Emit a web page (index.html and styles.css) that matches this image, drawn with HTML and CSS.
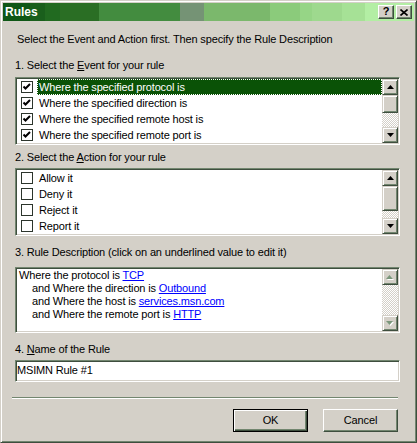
FILE: index.html
```html
<!DOCTYPE html>
<html>
<head>
<meta charset="utf-8">
<link rel="stylesheet" href="styles.css">
</head>
<body>
<div class="win">
  <div class="titlebar">
    <span class="title">Rules</span>
    <div class="caps">
      <div class="cap-btn help">?</div>
      <div class="cap-btn close">
        <svg width="8" height="7" viewBox="0 0 8 7"><path d="M0.5 0.5 L7.5 6.5 M7.5 0.5 L0.5 6.5" stroke="#000" stroke-width="1.6" fill="none"/></svg>
      </div>
    </div>
  </div>
  <div class="body">
    <p class="intro">Select the Event and Action first. Then specify the Rule Description</p>

    <div class="label l1">1. Select the <u>E</u>vent for your rule</div>
    <div class="sunken listbox">
      <ul class="items">
        <li class="item"><span class="check on"><svg width="10" height="10" viewBox="0 0 10 10"><polyline points="1.5,4.5 3.5,6.5 8,2" stroke="#000" stroke-width="2" fill="none"/></svg></span><span class="text selected">Where the specified protocol is</span></li>
        <li class="item"><span class="check on"><svg width="10" height="10" viewBox="0 0 10 10"><polyline points="1.5,4.5 3.5,6.5 8,2" stroke="#000" stroke-width="2" fill="none"/></svg></span><span class="text">Where the specified direction is</span></li>
        <li class="item"><span class="check on"><svg width="10" height="10" viewBox="0 0 10 10"><polyline points="1.5,4.5 3.5,6.5 8,2" stroke="#000" stroke-width="2" fill="none"/></svg></span><span class="text">Where the specified remote host is</span></li>
        <li class="item"><span class="check on"><svg width="10" height="10" viewBox="0 0 10 10"><polyline points="1.5,4.5 3.5,6.5 8,2" stroke="#000" stroke-width="2" fill="none"/></svg></span><span class="text">Where the specified remote port is</span></li>
      </ul>
      <div class="scrollbar">
        <div class="sb-btn"><svg width="7" height="4" viewBox="0 0 7 4"><polygon points="3.5,0 7,4 0,4" fill="#000"/></svg></div>
        <div class="sb-thumb t1"></div>
        <div class="sb-track"></div>
        <div class="sb-btn"><svg width="7" height="4" viewBox="0 0 7 4"><polygon points="0,0 7,0 3.5,4" fill="#000"/></svg></div>
      </div>
    </div>

    <div class="label l2">2. Select the <u>A</u>ction for your rule</div>
    <div class="sunken listbox lb2">
      <ul class="items">
        <li class="item"><span class="check"></span><span class="text">Allow it</span></li>
        <li class="item"><span class="check"></span><span class="text">Deny it</span></li>
        <li class="item"><span class="check"></span><span class="text">Reject it</span></li>
        <li class="item"><span class="check"></span><span class="text">Report it</span></li>
      </ul>
      <div class="scrollbar">
        <div class="sb-btn"><svg width="7" height="4" viewBox="0 0 7 4"><polygon points="3.5,0 7,4 0,4" fill="#000"/></svg></div>
        <div class="sb-thumb t2"></div>
        <div class="sb-track"></div>
        <div class="sb-btn"><svg width="7" height="4" viewBox="0 0 7 4"><polygon points="0,0 7,0 3.5,4" fill="#000"/></svg></div>
      </div>
    </div>

    <div class="label l3">3. Rule Description (click on an underlined value to edit it)</div>
    <div class="sunken descbox">
      <div class="desc">
        <div class="dline">Where the protocol is <a class="link">TCP</a></div>
        <div class="dline ind">and Where the direction is <a class="link">Outbound</a></div>
        <div class="dline ind">and Where the host is <a class="link">services.msn.com</a></div>
        <div class="dline ind">and Where the remote port is <a class="link">HTTP</a></div>
      </div>
      <div class="scrollbar">
        <div class="sb-btn dis"><svg width="8" height="5" viewBox="0 0 8 5"><polygon points="4.5,1 8,5 1,5" fill="#fff"/><polygon points="3.5,0 7,4 0,4" fill="#7a967a"/></svg></div>
        <div class="sb-track"></div>
        <div class="sb-btn dis"><svg width="8" height="5" viewBox="0 0 8 5"><polygon points="1,1 8,1 4.5,5" fill="#fff"/><polygon points="0,0 7,0 3.5,4" fill="#7a967a"/></svg></div>
      </div>
    </div>

    <div class="label l4">4. <u>N</u>ame of the Rule</div>
    <div class="sunken input">MSIMN Rule #1</div>

    <div class="sep"></div>

    <div class="buttons">
      <div class="btn default"><span class="btn-in">OK</span></div>
      <div class="btn"><span class="btn-in">Cancel</span></div>
    </div>
  </div>
</div>
</body>
</html>
```

FILE: styles.css
```css
* { box-sizing: border-box; }
html, body { margin: 0; padding: 0; background: #d4d0c8; }
body { font-family: "Liberation Sans", Arial, sans-serif; font-size: 11px; line-height: 13px; color: #000; letter-spacing: -0.15px; }

.win {
  width: 417px;
  height: 443px;
  background: #d4d0c8;
  border: 1px solid;
  border-color: #d4d0c8 #3e4e3e #3e4e3e #d4d0c8;
  box-shadow: inset 1px 1px #fff, inset -1px -1px #72866f;
  padding: 2px;
  display: flex;
  flex-direction: column;
}

.titlebar {
  height: 18px;
  display: flex;
  align-items: center;
  justify-content: space-between;
  padding: 0 2px;
  background: linear-gradient(to right,
    #0f5716 0 27px, #1a5f1c 27px 42px, #216a20 42px 57px, #2a6e24 57px 96px,
    #438c3f 96px 177px, #759375 177px 201px, #7bb86c 201px 267px,
    #8bcb7b 267px 297px, #96d586 297px 309px, #9ed98e 309px 339px,
    #a6e196 339px 362px, #b3eea4 362px);
}
.title { color: #fff; font-weight: bold; font-size: 12px; letter-spacing: 0; }
.caps { display: flex; gap: 2px; }
.cap-btn {
  width: 16px; height: 14px;
  background: #d4d0c8;
  border: 1px solid; border-color: #fff #3e4e3e #3e4e3e #fff;
  box-shadow: inset -1px -1px #72866f;
  display: flex; align-items: center; justify-content: center;
  font-weight: bold; font-size: 11px; line-height: 11px; letter-spacing: 0;
}
.cap-btn.help { padding-bottom: 1px; }

.body {
  flex: 1;
  display: flex;
  flex-direction: column;
  padding: 0 14px 0 12px;
}

.intro { margin: 12px 0 0 2px; }
.label u { text-decoration: underline; }
.l1 { margin-top: 13px; }
.l2 { margin-top: 6px; }
.l3 { margin-top: 10px; }
.l4 { margin-top: 10px; }

.sunken {
  background: #fff;
  border: 1px solid;
  border-color: #72866f #fff #fff #72866f;
  box-shadow: inset 1px 1px #3e4e3e, inset -1px -1px #d4d0c8;
  padding: 1px;
}

.listbox { height: 68px; display: flex; margin-top: 5px; }
.lb2 { margin-top: 4px; }
.items { flex: 1; list-style: none; margin: 0; padding: 0; }
.item { height: 16px; display: flex; align-items: center; }
.check {
  width: 12px; height: 12px;
  margin-left: 4px;
  border: 1px solid #2c352c;
  background: #fff;
  display: flex; align-items: center; justify-content: center;
}
.check svg { display: block; }
.text { margin-left: 4px; padding: 0 1px 0 1px; border: 1px solid transparent; line-height: 14px; }
.text.selected {
  flex: 1;
  background: #0a5206;
  color: #fff;
  border: 1px dotted #fff;
}

.scrollbar { width: 16px; display: flex; flex-direction: column; }
.sb-btn, .sb-thumb {
  background: #d4d0c8;
  border: 1px solid;
  border-color: #d4d0c8 #3e4e3e #3e4e3e #d4d0c8;
  box-shadow: inset 1px 1px #fff, inset -1px -1px #72866f;
}
.sb-btn { height: 16px; display: flex; align-items: center; justify-content: center; }
.sb-btn svg { display: block; }
.t1 { height: 18px; }
.t2 { height: 25px; }
.sb-track {
  flex: 1;
  background-color: #d4d0c8;
  background-image: conic-gradient(#fff 25%, #d4d0c8 0 50%, #fff 0 75%, #d4d0c8 0);
  background-size: 2px 2px;
}

.descbox { height: 66px; display: flex; margin-top: 8px; }
.desc { flex: 1; padding-left: 2px; }
.dline { height: 13px; white-space: nowrap; }
.dline.ind { padding-left: 13px; }
.link { color: #0000ff; text-decoration: underline; }

.input { height: 22px; margin-top: 4px; padding: 3px 1px 0; }

.sep {
  margin: 15px 0 0 -3px;
  width: 386px;
  height: 2px;
  border-top: 1px solid #72866f;
  border-bottom: 1px solid #fff;
}

.buttons { display: flex; justify-content: flex-end; gap: 15px; margin: 10px 2px 0 0; }
.btn {
  width: 75px; height: 23px;
  background: #d4d0c8;
  border: 1px solid;
  border-color: #fff #3e4e3e #3e4e3e #fff;
  box-shadow: inset -1px -1px #72866f;
  display: flex; align-items: center; justify-content: center;
}
.btn.default {
  border: 1px solid #000;
  box-shadow: inset 1px 1px #fff, inset -1px -1px #3e4e3e, inset -2px -2px #72866f;
}
.btn-in { line-height: 13px; }
```
